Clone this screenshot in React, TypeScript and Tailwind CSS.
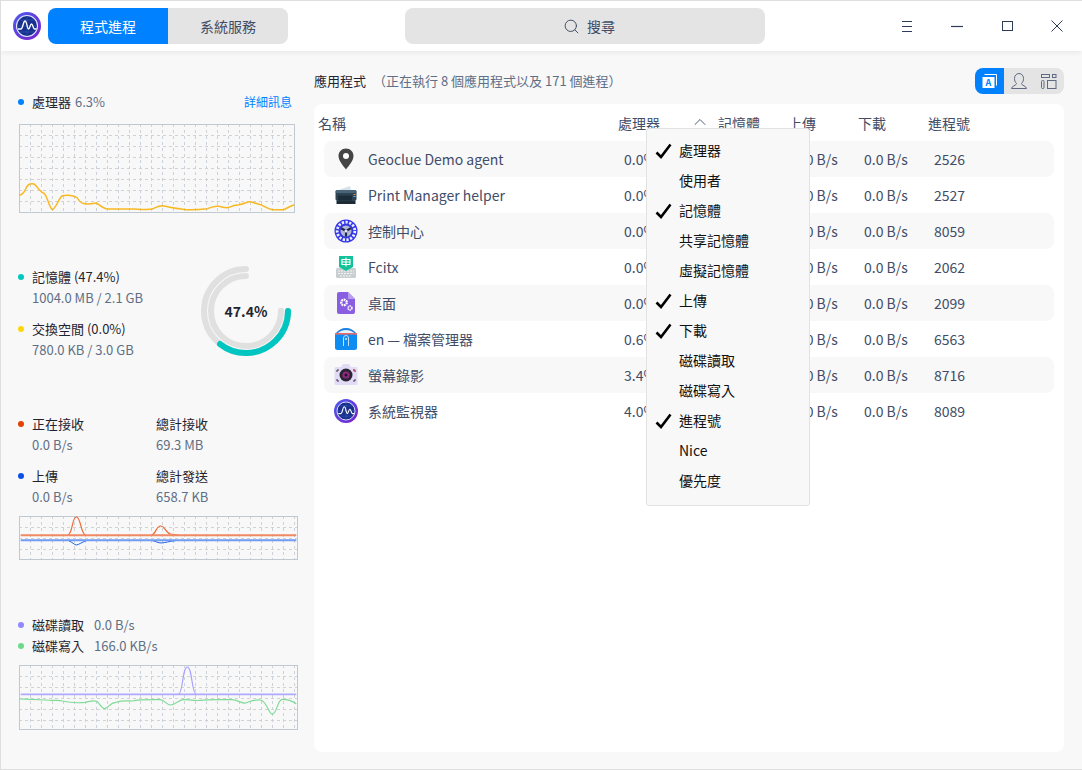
import { Search, ChevronUp } from 'lucide-react'
import type { ReactNode } from 'react'

const rows = [
  { name: 'Geoclue Demo agent', cpu: '0.0%', pid: '2526', icon: 'pin' },
  { name: 'Print Manager helper', cpu: '0.0%', pid: '2527', icon: 'printer' },
  { name: '控制中心', cpu: '0.0%', pid: '8059', icon: 'control' },
  { name: 'Fcitx', cpu: '0.0%', pid: '2062', icon: 'fcitx' },
  { name: '桌面', cpu: '0.0%', pid: '2099', icon: 'desktop' },
  { name: 'en — 檔案管理器', cpu: '0.6%', pid: '6563', icon: 'files' },
  { name: '螢幕錄影', cpu: '3.4%', pid: '8716', icon: 'camera' },
  { name: '系統監視器', cpu: '4.0%', pid: '8089', icon: 'monitor' },
]

const menu = [
  { label: '處理器', on: true },
  { label: '使用者', on: false },
  { label: '記憶體', on: true },
  { label: '共享記憶體', on: false },
  { label: '虛擬記憶體', on: false },
  { label: '上傳', on: true },
  { label: '下載', on: true },
  { label: '磁碟讀取', on: false },
  { label: '磁碟寫入', on: false },
  { label: '進程號', on: true },
  { label: 'Nice', on: false },
  { label: '優先度', on: false },
]

const MonitorLogo = ({ size }: { size: number }) => (
  <svg width={size} height={size} viewBox="0 0 28 28">
    <defs>
      <linearGradient id="lg" x1="0" y1="0" x2="1" y2="1">
        <stop offset="0" stopColor="#4b5cf0" />
        <stop offset="1" stopColor="#7a1fc8" />
      </linearGradient>
    </defs>
    <circle cx="14" cy="14" r="14" fill="url(#lg)" />
    <circle cx="14" cy="14" r="10.500" fill="#16308c" stroke="#e4e8ff" strokeWidth="1.100" />
    <path d="M4 14h20M14 4v20M7 8h14M7 20h14" stroke="#3a5cc0" strokeWidth=".6" />
    <path d="M5 17h3c2 0 2-8 4-8s2 8 3.500 8 1.500-5 3-5 1.500 5 3 5h2" fill="none" stroke="#fff" strokeWidth="1.300" />
  </svg>
)

const AppIcon = ({ kind }: { kind: string }) => {
  if (kind === 'pin')
    return (
      <svg width="24" height="24" viewBox="0 0 24 24">
        <path d="M12 1.500c-4.300 0-7.500 3.300-7.500 7.600 0 4.800 5 10.200 7.500 13.400 2.500-3.200 7.500-8.600 7.500-13.400 0-4.300-3.200-7.600-7.500-7.600z" fill="#454545" />
        <circle cx="12" cy="9" r="3" fill="#fff" />
      </svg>
    )
  if (kind === 'printer')
    return (
      <svg width="24" height="24" viewBox="0 0 24 24">
        <path d="M5 7l2-1 9-3 1 4z" fill="#d5e3ea" />
        <rect x="1.500" y="7" width="21" height="11" rx="2" fill="#2d4353" />
        <rect x="1.500" y="7" width="21" height="3" rx="1.500" fill="#4a6478" />
        <rect x="4" y="12.500" width="14" height="5" fill="#1c2c38" />
        <rect x="19.500" y="11" width="2" height="1" fill="#e9973a" />
        <rect x="19.500" y="13" width="2" height="1" fill="#5db7e8" />
        <rect x="2.500" y="18" width="19" height="3" fill="#1d2b36" />
      </svg>
    )
  if (kind === 'control')
    return (
      <svg width="24" height="24" viewBox="0 0 24 24">
        <circle cx="12" cy="12" r="11.500" fill="#3438e8" />
        <circle cx="12" cy="12" r="8.800" fill="none" stroke="#eceeff" strokeWidth="2.800" strokeDasharray="2.200 1.500" />
        <circle cx="12" cy="12" r="6.800" fill="#3038d8" />
        <circle cx="12" cy="12" r="5.500" fill="#b4b8d8" />
        <path d="M12 12V17.500M12 12L7.200 9.200M12 12L16.800 9.200" stroke="#23264f" strokeWidth="2.200" />
        <circle cx="12" cy="12" r="1.600" fill="#e4e6f6" />
      </svg>
    )
  if (kind === 'fcitx')
    return (
      <svg width="24" height="24" viewBox="0 0 24 24">
        <rect x="2" y="13" width="20" height="10" rx="1.500" fill="#c9ced0" />
        <path d="M4 16h16M4 18.500h16M6 21h12" stroke="#f1f3f4" strokeWidth="1.200" strokeDasharray="2 1" />
        <path d="M5 1h14v11l-7 4-7-4z" fill="#12c29a" />
        <path d="M8 4.500h8v5H8zM12 2.500v9M8 7h8" fill="none" stroke="#fff" strokeWidth="1.100" />
      </svg>
    )
  if (kind === 'desktop')
    return (
      <svg width="24" height="24" viewBox="0 0 24 24">
        <path d="M3 3a2 2 0 0 1 2-2h9l7 7v13a2 2 0 0 1-2 2H5a2 2 0 0 1-2-2z" fill="#8a5ee0" />
        <path d="M14 1l7 7h-7z" fill="#b79cf0" />
        <circle cx="10" cy="11.500" r="2.800" fill="none" stroke="#fff" strokeWidth="2.200" strokeDasharray="1.800 .7" />
        <circle cx="16" cy="17" r="1.900" fill="none" stroke="#fff" strokeWidth="1.700" strokeDasharray="1.300 .6" />
      </svg>
    )
  if (kind === 'files')
    return (
      <svg width="24" height="24" viewBox="0 0 24 24">
        <path d="M1.500 6.500C4 3 8 1 12 1s8 2 10.500 5.500z" fill="#1a7fe0" />
        <path d="M3 6.500C6 4 9 3 12 3s6 1 9 3.500z" fill="#e8f3fb" />
        <rect x="1" y="6" width="22" height="17" rx="2.500" fill="#0f8cf2" />
        <rect x="1" y="6" width="22" height="1.600" fill="#ea6a6a" />
        <path d="M9.500 19v-8a2.500 2.500 0 0 1 5 0v8" fill="none" stroke="#bfe2ff" strokeWidth="1" />
        <rect x="11.300" y="11" width="1.400" height="2" fill="#dff1ff" />
      </svg>
    )
  if (kind === 'camera')
    return (
      <svg width="24" height="24" viewBox="0 0 24 24">
        <path d="M7 4l2-3h6l2 3h5a1.500 1.500 0 0 1 1.500 1.500v15A1.500 1.500 0 0 1 22 22H2a1.500 1.500 0 0 1-1.500-1.500v-15A1.500 1.500 0 0 1 2 4z" fill="#e2dbf5" />
        <path d="M3 9V7h2M21 9V7h-2M3 16v2h2M21 16v2h-2" fill="none" stroke="#3a3450" strokeWidth="1" />
        <circle cx="12" cy="12" r="6.500" fill="#2a2433" />
        <circle cx="12" cy="12" r="3.600" fill="#8e2a80" />
        <circle cx="12" cy="12" r="1.500" fill="#1d1626" />
        <circle cx="20" cy="7.500" r="1" fill="#e94a5a" />
      </svg>
    )
  return <MonitorLogo size={24} />
}

const Dot = ({ color }: { color: string }) => (
  <span className={`w-[6px] h-[6px] rounded-full shrink-0 ${color}`} />
)

// sidebar chart: dashed 11px grid, curves are drawn 3x and scaled down
const Chart = ({ width, height, children }: { width: number; height: number; children: ReactNode }) => {
  const xs = Array.from({ length: Math.floor((width - 2) / 11) }, (_, i) => (i + 1) * 11 + 0.5)
  const ys = Array.from({ length: Math.floor((height - 2) / 11) }, (_, i) => (i + 1) * 11 + 0.5)
  return (
    <svg width={width} height={height} viewBox={`0 0 ${width} ${height}`} className="block">
      {xs.map((x) => (
        <path key={x} d={`M${x} 0V${height}`} stroke="#cbd2d9" strokeWidth="1" strokeDasharray="3 3" />
      ))}
      {ys.map((y) => (
        <path key={y} d={`M0 ${y}H${width}`} stroke="#d2d2d2" strokeWidth="1" strokeDasharray="3 3" />
      ))}
      <rect x=".5" y=".5" width={width - 1} height={height - 1} fill="none" stroke="#c0c8d2" />
      <g transform="scale(.3333)" fill="none">
        {children}
      </g>
    </svg>
  )
}

const Check = () => (
  <svg width="17" height="16" viewBox="0 0 17 16" className="absolute left-[8px] top-[8px]">
    <path d="M1.500 9.500l4.500 4.500L15.500 1.500" fill="none" stroke="#000" strokeWidth="2.600" />
  </svg>
)

const App = () => (
  <div
    className="w-[1082px] h-[770px] flex flex-col bg-[#f8f8f8] border-l border-t border-b border-[#dedede] overflow-hidden relative"
    style={{ fontFamily: "'Noto Sans CJK TC', 'Noto Sans', sans-serif" }}
  >
    {/* title bar */}
    <header className="h-[50px] shrink-0 bg-white shadow-[0_1px_6px_rgba(0,0,0,0.08)] flex items-center relative z-10">
      <div className="ml-[12px] w-[28px] h-[28px]">
        <MonitorLogo size={28} />
      </div>
      <div className="ml-[7px] w-[240px] h-[36px] rounded-lg overflow-hidden flex text-[14px]">
        <div className="w-[120px] bg-[#0081ff] text-white flex items-center justify-center">程式進程</div>
        <div className="w-[120px] bg-[#e4e4e4] text-[#414d68] flex items-center justify-center">系統服務</div>
      </div>
      <div className="ml-[117px] w-[360px] h-[36px] pl-[8px] rounded-lg bg-[#e4e4e4] flex items-center justify-center gap-[7px] text-[14px] text-[#414d68]">
        <Search size={17} strokeWidth={1.4} />
        <span>搜尋</span>
      </div>
      <div className="ml-auto flex items-center text-[#2f3c58]">
        <div className="w-[50px] flex justify-center">
          <svg width="12" height="12" viewBox="0 0 12 12"><path d="M1 1.500h10M1 6.500h10M1 11.500h10" stroke="currentColor" fill="none" /></svg>
        </div>
        <div className="w-[50px] flex justify-center">
          <svg width="12" height="12" viewBox="0 0 12 12"><path d="M0 6.500h12" stroke="currentColor" fill="none" strokeWidth="1.200" /></svg>
        </div>
        <div className="w-[50px] flex justify-center">
          <svg width="12" height="12" viewBox="0 0 12 12"><rect x="1.500" y="1.500" width="10" height="9" stroke="currentColor" fill="none" /></svg>
        </div>
        <div className="w-[50px] flex justify-center">
          <svg width="12" height="12" viewBox="0 0 12 12"><path d="M.5.500l11 11M11.500.500l-11 11" stroke="currentColor" fill="none" /></svg>
        </div>
      </div>
    </header>

    <div className="flex-1 flex min-h-0">
      {/* sidebar */}
      <aside className="w-[313px] shrink-0 pl-[17px] text-[13px] leading-[21px] text-[#5f6f86]">
        <div className="mt-[40px] h-[21px] flex items-center pr-[22px]">
          <Dot color="bg-[#0081ff]" />
          <span className="ml-[8px] text-[#1f2430]">處理器</span>
          <span className="ml-[4px]">6.3%</span>
          <span className="ml-auto text-[12px] text-[#0081ff]">詳細訊息</span>
        </div>
        <div className="mt-[12px] ml-[1px]">
          <Chart width={276} height={89}>
            <path
              d="M0 215C8 212 16 205 20 195C25 180 35 178 45 180C55 185 60 203 75 208C85 215 90 250 100 257C110 255 118 225 130 215C145 213 165 215 175 222C185 240 195 243 232 237C245 245 255 255 265 255L345 255C365 256 385 258 400 255C410 250 420 245 430 245C445 248 470 254 500 257C530 258 550 256 565 254C580 248 590 245 600 247C610 250 620 253 630 250C640 245 650 242 660 242C675 240 685 232 695 233C705 236 715 240 725 242C735 246 745 255 760 257L795 257C805 252 815 245 826 242"
              stroke="#f9b81f"
              strokeWidth="4.500"
            />
          </Chart>
        </div>

        <div className="mt-[53px] flex">
          <div className="w-[182px]">
            <div className="h-[21px] flex items-center">
              <Dot color="bg-[#00c8c0]" />
              <span className="ml-[8px] text-[#1f2430]">記憶體 (47.4%)</span>
            </div>
            <div className="ml-[14px]">1004.0 MB / 2.1 GB</div>
            <div className="mt-[10px] h-[21px] flex items-center">
              <Dot color="bg-[#fed70a]" />
              <span className="ml-[8px] text-[#1f2430]">交換空間 (0.0%)</span>
            </div>
            <div className="ml-[14px]">780.0 KB / 3.0 GB</div>
          </div>
          <div className="relative w-[92px] h-[92px] -mt-[1px]">
            <svg width="92" height="92" viewBox="0 0 92 92" fill="none" strokeLinecap="round" strokeWidth="6">
              <circle cx="46" cy="46" r="35" stroke="#e0e0e0" strokeDasharray="164.900 300" transform="rotate(-90 46 46) scale(1 -1) translate(0 -92)" />
              <circle cx="46" cy="46" r="42" stroke="#e0e0e0" strokeDasharray="197.900 300" transform="rotate(-90 46 46) scale(1 -1) translate(0 -92)" />
              <circle cx="46" cy="46" r="42" stroke="#00c5c0" strokeDasharray="93.800 300" />
            </svg>
            <div className="absolute inset-0 flex items-center justify-center text-[14px] font-bold text-[#1f2430]">47.4%</div>
          </div>
        </div>

        <div className="mt-[53px] grid grid-cols-[138px_1fr]">
          <div className="h-[21px] flex items-center">
            <Dot color="bg-[#e14300]" />
            <span className="ml-[8px] text-[#1f2430]">正在接收</span>
          </div>
          <div className="h-[21px] text-[#1f2430]">總計接收</div>
          <div className="ml-[14px]">0.0 B/s</div>
          <div>69.3 MB</div>
          <div className="mt-[10px] h-[21px] flex items-center">
            <Dot color="bg-[#0a50e6]" />
            <span className="ml-[8px] text-[#1f2430]">上傳</span>
          </div>
          <div className="mt-[10px] h-[21px] text-[#1f2430]">總計發送</div>
          <div className="ml-[14px]">0.0 B/s</div>
          <div>658.7 KB</div>
        </div>
        <div className="mt-[9px] ml-[1px]">
          <Chart width={279} height={44}>
            <path d="M150 75C160 78 165 86 172 87C180 86 190 78 200 75M400 74C410 76 418 81 427 81C440 80 450 76 470 74" stroke="#1f5fe0" strokeWidth="3" />
            <path d="M5 73H832" stroke="#6f9cf5" strokeWidth="6" />
            <path d="M146 57C162 55 158 3 172 3C186 3 185 55 200 57M397 57C412 55 410 30 425 30C438 30 440 52 455 54C465 55 470 57 480 57" stroke="#ea6a38" strokeWidth="3.600" />
            <path d="M5 58H832" stroke="#ef8a64" strokeWidth="6" />
          </Chart>
        </div>

        <div className="mt-[54px] h-[21px] flex items-center">
          <Dot color="bg-[#8f88ff]" />
          <span className="ml-[8px] text-[#1f2430]">磁碟讀取</span>
          <span className="ml-[10px]">0.0 B/s</span>
        </div>
        <div className="h-[21px] flex items-center">
          <Dot color="bg-[#6ed98a]" />
          <span className="ml-[8px] text-[#1f2430]">磁碟寫入</span>
          <span className="ml-[10px]">166.0 KB/s</span>
        </div>
        <div className="mt-[9px] ml-[1px]">
          <Chart width={279} height={65}>
            <path d="M478 88C492 88 490 6 505 6C520 6 518 88 532 88" stroke="#a7a2ff" strokeWidth="3.600" />
            <path d="M5 88H832" stroke="#aeaaff" strokeWidth="5.400" />
            <path d="M2 102C30 103 60 104 80 105C100 108 120 104 130 108C150 113 180 114 200 112C215 108 225 104 235 110C245 122 250 131 257 131C270 128 272 113 290 112C310 106 320 108 340 108C360 103 400 104 425 104C440 108 445 121 455 120C470 118 480 104 495 103C510 104 530 108 545 106C565 103 590 104 640 104C655 105 670 116 680 114C695 108 705 103 725 105C745 112 750 148 760 148C775 145 775 103 790 103C805 103 820 108 832 116" stroke="#7fdc97" strokeWidth="3.600" />
          </Chart>
        </div>
      </aside>

      {/* main panel */}
      <main className="flex-1 min-w-0 pr-[18px] flex flex-col">
        <div className="h-[53px] shrink-0 flex items-center text-[13px]">
          <span className="mt-[7px] text-[#1f2430]">應用程式</span>
          <span className="mt-[7px] ml-[7px] text-[#5f6f86]">（正在執行 8 個應用程式以及 171 個進程）</span>
          <div className="ml-auto h-[26px] w-[89px] rounded-lg overflow-hidden bg-[#e4e4e4] flex text-[#5d6a82] mt-[7px]">
            <div className="w-[29px] bg-[#0081ff] flex items-center justify-center">
              <svg width="18" height="18" viewBox="0 0 18 18">
                <path d="M3.500 2.500h12v11" fill="none" stroke="#fff" strokeWidth="1" />
                <rect x="1.500" y="5" width="12" height="11" fill="#fff" />
                <text x="7.500" y="14" textAnchor="middle" fontSize="9" fontWeight="700" fill="#0081ff">A</text>
              </svg>
            </div>
            <div className="w-[30px] flex items-center justify-center">
              <svg width="18" height="18" viewBox="0 0 18 18" fill="none" stroke="currentColor">
                <path d="M1.500 16.500h15c0-2.500-5-3-5-5 1.500-1.500 2-3 2-5 0-3-2-5-4.500-5S4.500 3.500 4.500 6.500c0 2 .5 3.500 2 5 0 2-5 2.500-5 5z" />
              </svg>
            </div>
            <div className="w-[30px] flex items-center justify-center">
              <svg width="16" height="16" viewBox="0 0 16 16" fill="none" stroke="currentColor">
                <rect x=".5" y="1.500" width="8" height="3" />
                <rect x="11.500" y="1.500" width="3.500" height="3" />
                <rect x=".5" y="7.500" width="2.500" height="8" rx="1" />
                <rect x="6.500" y="7.500" width="8.500" height="8" />
              </svg>
            </div>
          </div>
        </div>

        <div className="relative w-[750px] h-[648px] bg-white rounded-lg">
          <div className="h-[37px] pt-[2px] flex items-center text-[14px] text-[#414d68]">
            <div className="w-[304px] pl-[4px]">名稱</div>
            <div className="w-[100px] flex items-center justify-between pr-[8px]">
              <span>處理器</span>
              <ChevronUp size={20} strokeWidth={1.100} className="-mt-[4px]" />
            </div>
            <div className="w-[70px]">記憶體</div>
            <div className="w-[70px]">上傳</div>
            <div className="w-[70px]">下載</div>
            <div>進程號</div>
          </div>
          <div className="px-[10px]">
            {rows.map((r, i) => (
              <div
                key={r.pid}
                className={`h-[36px] flex items-center rounded-lg text-[14px] text-[#414d68] ${i % 2 === 0 ? 'bg-[#f8f8f8]' : ''}`}
              >
                <div className="w-[294px] flex items-center">
                  <div className="ml-[10px] w-[24px] h-[24px] shrink-0">
                    <AppIcon kind={r.icon} />
                  </div>
                  <span className="ml-[10px]">{r.name}</span>
                </div>
                <div className="w-[100px] pl-[6px]">{r.cpu}</div>
                <div className="w-[70px]" />
                <div className="w-[70px] pl-[6px]">0.0 B/s</div>
                <div className="w-[70px] pl-[6px]">0.0 B/s</div>
                <div className="pl-[6px]">{r.pid}</div>
              </div>
            ))}
          </div>

          {/* column picker */}
          <div className="absolute left-[332px] top-[24px] w-[164px] h-[378px] bg-[#f8f8f8] border border-[#e2e2e2] rounded-[3px] py-[6px] text-[14px] text-[#111] z-20">
            {menu.map((m) => (
              <div key={m.label} className="relative h-[30px] pl-[32px] flex items-center">
                {m.on && <Check />}
                {m.label}
              </div>
            ))}
          </div>
        </div>
      </main>
    </div>
  </div>
)

export default App
